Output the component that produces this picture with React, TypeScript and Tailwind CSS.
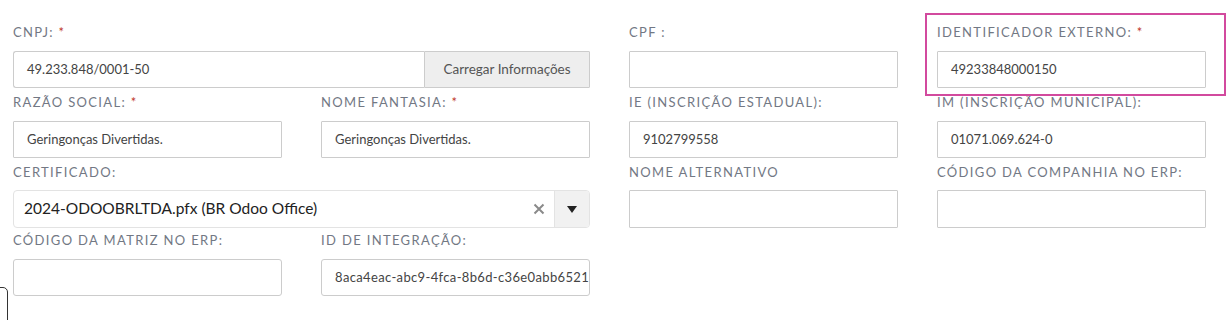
import { ReactNode } from "react"

const LABEL = "block pt-[4px] h-[25px] leading-[21px] text-[13px] tracking-[1.35px] uppercase text-[#727884] whitespace-nowrap"
const INPUT = "h-[37px] border border-[#cccccc] bg-white px-[13px] flex items-center text-[13px] text-[#444] whitespace-nowrap overflow-hidden"

function Field({ label, required, gap = "mb-[8px]", className = "", children }: { label: string; required?: boolean; gap?: string; className?: string; children: ReactNode }) {
  return (
    <div className={className}>
      <span className={`${LABEL} ${gap}`}>
        {label}
        {required && <span className="text-[#c0392b]"> *</span>}
      </span>
      {children}
    </div>
  )
}

function TextInput({ value, rounded, extra = "" }: { value?: string; rounded?: boolean; extra?: string }) {
  return <div className={`${INPUT} ${rounded ? "rounded-[3px]" : "rounded-[1px]"} ${extra}`}>{value}</div>
}

export default function App() {
  return (
    <div className="relative w-[1231px] h-[320px] overflow-hidden bg-white font-['Lato',sans-serif]">
      <div className="grid grid-cols-[269px_269px_269px_269px] gap-x-[39px] items-start pl-[13px] pt-[18px]">
        {/* coluna esquerda */}
        <div className="col-span-2 grid grid-cols-[269px_269px] gap-x-[39px] content-start">
          <div className="col-span-2">
            <Field label="CNPJ:" required>
              <div className="flex h-[37px]">
                <div className={`${INPUT} flex-1 rounded-l-[3px] border-r-0`}>49.233.848/0001-50</div>
                <button className="h-[37px] w-[166px] border border-[#cccccc] bg-[#eeeeee] text-[13.5px] text-[#555] rounded-r-[1px]">
                  Carregar Informações
                </button>
              </div>
            </Field>
          </div>
          <Field label="Razão Social:" required>
            <TextInput value="Geringonças Divertidas." />
          </Field>
          <Field label="Nome Fantasia:" required>
            <TextInput value="Geringonças Divertidas." />
          </Field>
          <Field label="Certificado:" gap="mb-[7px]" className="col-span-2 mb-[-2px]">
            <div className="flex h-[38px] border border-[#e3e3e3] rounded-[4px] overflow-hidden">
              <div className="flex-1 flex items-center pl-[10px] text-[15.5px] text-[#222] whitespace-nowrap">
                2024-ODOOBRLTDA.pfx (BR Odoo Office)
              </div>
              <div className="w-[30px] flex items-center justify-center">
                <svg width="12" height="12" viewBox="0 0 12 12">
                  <path d="M1.5 1.5l9 9M10.5 1.5l-9 9" stroke="#8a8a8a" strokeWidth="2" />
                </svg>
              </div>
              <div className="w-[35px] flex items-center justify-center bg-[#f1f1f1] border-l border-[#e3e3e3]">
                <svg width="10" height="7" viewBox="0 0 10 7">
                  <path d="M0 0h10L5 7z" fill="#222" />
                </svg>
              </div>
            </div>
          </Field>
          <Field label="Código da Matriz no ERP:">
            <TextInput rounded />
          </Field>
          <Field label="ID de Integração:">
            <TextInput rounded value="8aca4eac-abc9-4fca-8b6d-c36e0abb6521" extra="tracking-[0.35px]" />
          </Field>
        </div>

        {/* coluna direita */}
        <div className="col-span-2 grid grid-cols-[269px_269px] gap-x-[39px] content-start">
          <Field label="CPF :">
            <TextInput />
          </Field>
          <Field label="Identificador Externo:" required>
            <TextInput value="49233848000150" />
          </Field>
          <Field label="IE (Inscrição Estadual):">
            <TextInput value="9102799558" />
          </Field>
          <Field label="IM (Inscrição Municipal):">
            <TextInput value="01071.069.624-0" />
          </Field>
          <Field label="Nome Alternativo" gap="mb-[7px]">
            <TextInput extra="h-[38px]" />
          </Field>
          <Field label="Código da Companhia no ERP:" gap="mb-[7px]">
            <TextInput extra="h-[38px]" />
          </Field>
        </div>
      </div>

      {/* destaque */}
      <div className="absolute left-[925px] top-[13px] w-[301px] h-[83px] border-[2px] border-[#d24a9e] pointer-events-none" />
      {/* fragmento no canto */}
      <div className="absolute left-[-12px] top-[287px] w-[20px] h-[60px] border border-[#333] rounded-[5px]" />
    </div>
  )
}
